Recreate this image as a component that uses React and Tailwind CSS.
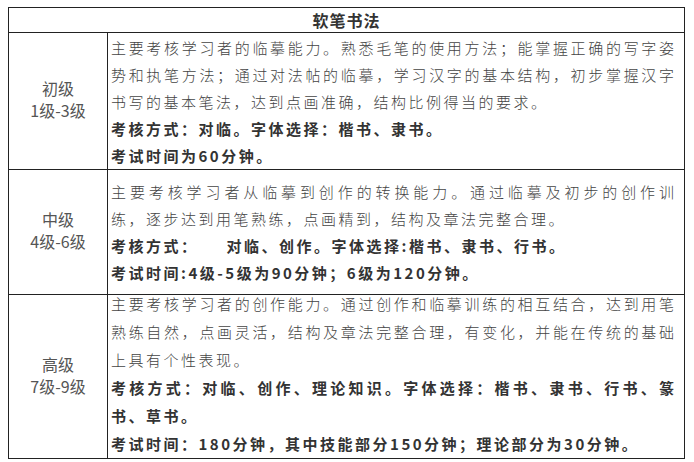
import React from "react";

const body = '"Noto Sans CJK SC", "Noto Sans", sans-serif';

const Line = ({ text, bold, full }) => (
  <span
    className={
      "block whitespace-nowrap text-[15px] " +
      (bold ? "font-bold text-[#333] " : "font-light text-[#444] ") +
      (full ? "tracking-[1px] [text-align-last:justify]" : "tracking-[2.5px]")
    }
  >
    {text}
  </span>
);

const rows = [
  {
    level: "初级",
    range: "1级-3级",
    h: "h-[137px]",
    inner: "leading-[27px]",
    lines: [
      { text: "主要考核学习者的临摹能力。熟悉毛笔的使用方法；能掌握正确的写字姿", full: true },
      { text: "势和执笔方法；通过对法帖的临摹，学习汉字的基本结构，初步掌握汉字", full: true },
      { text: "书写的基本笔法，达到点画准确，结构比例得当的要求。" },
      { text: "考核方式：对临。字体选择：楷书、隶书。", bold: true },
      { text: "考试时间为60分钟。", bold: true },
    ],
  },
  {
    level: "中级",
    range: "4级-6级",
    h: "h-[125px]",
    inner: "leading-[27px]",
    lines: [
      { text: "主要考核学习者从临摹到创作的转换能力。通过临摹及初步的创作训", full: true },
      { text: "练，逐步达到用笔熟练，点画精到，结构及章法完整合理。" },
      {
        text: (
          <>
            考核方式：<span className="inline-block w-[28px]"></span>对临、创作。字体选择:楷书、隶书、行书。
          </>
        ),
        bold: true,
      },
      { text: "考试时间:4级-5级为90分钟；6级为120分钟。", bold: true },
    ],
  },
  {
    level: "高级",
    range: "7级-9级",
    h: "h-[163px]",
    inner: "leading-[28px] -mt-[5px]",
    lines: [
      { text: "主要考核学习者的创作能力。通过创作和临摹训练的相互结合，达到用笔", full: true },
      { text: "熟练自然，点画灵活，结构及章法完整合理，有变化，并能在传统的基础", full: true },
      { text: "上具有个性表现。" },
      { text: "考核方式：对临、创作、理论知识。字体选择：楷书、隶书、行书、篆", bold: true, full: true },
      { text: "书、草书。", bold: true },
      { text: "考试时间：180分钟，其中技能部分150分钟；理论部分为30分钟。", bold: true },
    ],
  },
];

export default function App() {
  return (
    <div className="w-[694px] h-[462px] bg-white pt-[7px] pl-[8px]" style={{ fontFamily: body }}>
      <table className="border-collapse w-[677px] table-fixed">
        <colgroup>
          <col className="w-[99px]" />
          <col />
        </colgroup>
        <tbody>
          <tr className="h-[25px]">
            <td
              colSpan={2}
              className="border border-[#222] text-center font-bold text-[16px] tracking-[1px] text-[#333] leading-[24px] p-0"
            >
              软笔书法
            </td>
          </tr>
          {rows.map((r) => (
            <tr key={r.level} className={r.h}>
              <td className="border border-[#222] text-center align-middle text-[16px] leading-[22px] text-[#555] p-0 pb-[4px]">
                <div>{r.level}</div>
                <div>{r.range}</div>
              </td>
              <td className="border border-[#222] align-middle pl-[3px] pr-[9px] py-0">
                <div className={r.inner}>
                  {r.lines.map((l, i) => (
                    <Line key={i} {...l} />
                  ))}
                </div>
              </td>
            </tr>
          ))}
        </tbody>
      </table>
    </div>
  );
}
